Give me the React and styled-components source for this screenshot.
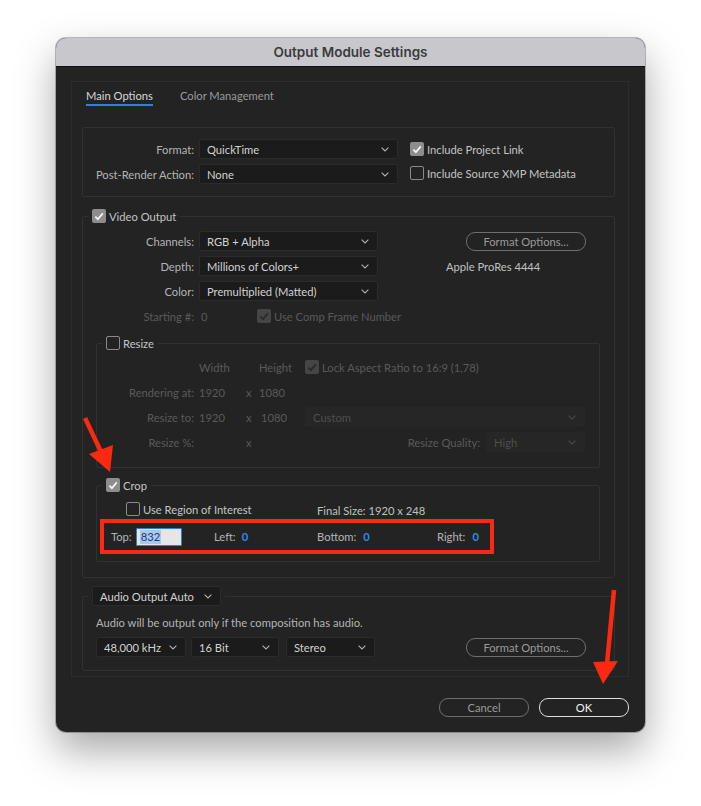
import React from "react";
import styled, { createGlobalStyle } from "styled-components";

const GlobalStyle = createGlobalStyle`
  html, body {
    margin: 0;
    background: #ffffff;
  }
  body {
    font-family: "Lato", "Liberation Sans", sans-serif;
    font-size: 11.2px;
  }
`;

const Page = styled.div`
  padding: 38px 0 0 56px;
  height: 806px;
  box-sizing: border-box;
`;

const Window = styled.div`
  position: relative;
  width: 589px;
  border-radius: 10px;
  overflow: hidden;
  background: #232323;
  box-shadow: 0 18px 40px rgba(0, 0, 0, 0.35), 0 0 0 1px rgba(0, 0, 0, 0.25);
`;

const TitleBar = styled.div`
  height: 28px;
  display: flex;
  align-items: center;
  justify-content: center;
  background: #c8c7cb;
  border-bottom: 1px solid #0e0e0e;
  font-family: "Inter", "Roboto", sans-serif;
  font-weight: 600;
  font-size: 13.5px;
  color: #3b3b3d;
`;

const Body = styled.div`
  padding: 14px 16px 15px 15px;
`;

const TabPanel = styled.div`
  border: 1px solid #2d2d2d;
  padding: 0 13px 5px 10px;
`;

const TabBar = styled.div`
  display: flex;
  gap: 27px;
  padding: 7px 0 0 4px;
  margin-bottom: 21px;
`;

const Tab = styled.div`
  height: 14px;
  line-height: 14px;
  padding-bottom: 1px;
  color: ${(p) => (p.$active ? "#d6d6d6" : "#9a9a9a")};
  border-bottom: 2px solid ${(p) => (p.$active ? "#2f7fe6" : "transparent")};
`;

const Box = styled.div`
  border: 1px solid #313131;
  border-radius: 2px;
  padding: 11px 0 12px;
`;

const Group = styled.fieldset`
  margin: ${(p) => p.$margin || "0"};
  padding: ${(p) => p.$padding || "0"};
  min-width: 0;
  border: 1px solid #313131;
  border-radius: 2px;
`;

const Legend = styled.legend`
  margin-left: 5px;
  padding: 0 4px;
  display: flex;
  align-items: center;
  gap: 4px;
  height: 20px;
  color: #c4c4c4;
`;

const FormRow = styled.div`
  display: grid;
  grid-template-columns: ${(p) => p.$cols};
  align-items: center;
  height: ${(p) => p.$h || 20}px;
`;

const Label = styled.div`
  text-align: right;
  padding-right: 5px;
  white-space: nowrap;
  color: ${(p) => (p.$disabled ? "#5a5a5a" : "#b4b4b4")};
`;

const Text = styled.span`
  white-space: nowrap;
  color: ${(p) => p.$color || "#b4b4b4"};
`;

const Stack = styled.div`
  display: flex;
  flex-direction: column;
  gap: ${(p) => p.$gap || "5px"};
  width: ${(p) => (p.$w ? `${p.$w}px` : "auto")};
  flex: none;
`;

const SelectBox = styled.div`
  box-sizing: border-box;
  width: ${(p) => p.$w}px;
  height: 20px;
  display: flex;
  align-items: center;
  justify-content: space-between;
  padding: 0 8px 0 7px;
  border-radius: 2px;
  background: ${(p) => (p.$disabled ? "#262626" : "#1b1b1b")};
  border: 1px solid ${(p) => (p.$disabled ? "#272727" : "#2b2b2b")};
  color: ${(p) => (p.$disabled ? "#4e4e4e" : "#d2d2d2")};
  white-space: nowrap;
`;

const Chevron = ({ color }) => (
  <svg width="8" height="5" viewBox="0 0 8 5">
    <path d="M0.6 0.6 L4 4 L7.4 0.6" fill="none" stroke={color} strokeWidth="1.1" />
  </svg>
);

const Select = ({ w, value, disabled }) => (
  <SelectBox $w={w} $disabled={disabled}>
    <span>{value}</span>
    <Chevron color={disabled ? "#4a4a4a" : "#b0b0b0"} />
  </SelectBox>
);

const CheckSquare = styled.span`
  box-sizing: border-box;
  width: 14px;
  height: 14px;
  flex: none;
  display: inline-flex;
  align-items: center;
  justify-content: center;
  border-radius: 2px;
  background: ${(p) => (p.$on ? (p.$disabled ? "#454545" : "#8d8d8d") : "transparent")};
  border: ${(p) => (p.$on ? "none" : "1.5px solid #8a8a8a")};
`;

const CheckWrap = styled.span`
  display: inline-flex;
  align-items: center;
  gap: 3px;
  white-space: nowrap;
  color: ${(p) => (p.$disabled ? "#5a5a5a" : "#c4c4c4")};
`;

const Checkbox = ({ on, disabled, children }) => (
  <CheckWrap $disabled={disabled}>
    <CheckSquare $on={on} $disabled={disabled}>
      {on && (
        <svg width="10" height="9" viewBox="0 0 10 9">
          <path
            d="M1.3 4.6 L3.9 7.2 L8.8 1.4"
            fill="none"
            stroke={disabled ? "#2a2a2a" : "#f2f2f2"}
            strokeWidth="1.8"
          />
        </svg>
      )}
    </CheckSquare>
    {children}
  </CheckWrap>
);

const Indent = styled.span`
  padding-left: ${(p) => p.$l}px;
`;

const PillButton = styled.div`
  box-sizing: border-box;
  width: ${(p) => p.$w || 90}px;
  height: 19px;
  margin-left: ${(p) => p.$ml || 0}px;
  display: flex;
  align-items: center;
  justify-content: center;
  border-radius: 9px;
  border: 1.5px solid ${(p) => (p.$primary ? "#dedede" : "#6f6f6f")};
  color: ${(p) => (p.$primary ? "#f4f4f4" : "#9a9a9a")};
  white-space: nowrap;
`;

const VideoTop = styled.div`
  display: flex;
  padding-top: 5px;
`;

const SideInfo = styled.div`
  display: flex;
  flex-direction: column;
  align-items: flex-start;
  gap: 9px;
  padding: 1px 0 0 68px;
`;

const CropHighlight = styled.div`
  box-sizing: border-box;
  width: 394px;
  height: 35px;
  margin: 0 0 0 3px;
  display: flex;
  align-items: center;
  padding-left: 7px;
  border: 4px solid #fa2a12;
`;

const Field = styled.div`
  width: ${(p) => p.$w}px;
  display: flex;
  align-items: center;
  justify-content: ${(p) => (p.$end ? "flex-end" : "flex-start")};
  gap: ${(p) => p.$gap}px;
  flex: none;
`;

const Value = styled.span`
  color: #2d8ceb;
  font-weight: 700;
`;

const NumberInput = styled.div`
  box-sizing: border-box;
  width: 46px;
  height: 18px;
  display: flex;
  align-items: center;
  padding-left: 3px;
  background: #e6e6e6;
  border: 1px solid #2c7ee0;
  border-radius: 1px;
  span {
    background: #a9c8ef;
    color: #1b3d78;
    padding: 0 1px;
    line-height: 14px;
  }
`;

const AudioInner = styled.div`
  padding: 10px 0 13px 13px;
`;

const AudioSelects = styled.div`
  display: flex;
  align-items: center;
  margin-top: 8px;
`;

const Footer = styled.div`
  display: flex;
  justify-content: flex-end;
  gap: 10px;
  padding: 21px 0 0;
`;

const Overlay = styled.svg`
  position: absolute;
  inset: 0;
  pointer-events: none;
`;

export default function App() {
  return (
    <>
      <GlobalStyle />
      <Page>
        <Window>
          <TitleBar>Output Module Settings</TitleBar>
          <Body>
            <TabPanel>
              <TabBar>
                <Tab $active>Main Options</Tab>
                <Tab>Color Management</Tab>
              </TabBar>

              <Box>
                <Stack>
                  <FormRow $cols="116px 199px auto">
                    <Label>Format:</Label>
                    <Select w={199} value="QuickTime" />
                    <Indent $l={12}>
                      <Checkbox on>Include Project Link</Checkbox>
                    </Indent>
                  </FormRow>
                  <FormRow $cols="116px 199px auto">
                    <Label>Post-Render Action:</Label>
                    <Select w={199} value="None" />
                    <Indent $l={12}>
                      <Checkbox>Include Source XMP Metadata</Checkbox>
                    </Indent>
                  </FormRow>
                </Stack>
              </Box>

              <Group $margin="9px 0 0" $padding="0 0 15px">
                <Legend>
                  <Checkbox on>Video Output</Checkbox>
                </Legend>
                <VideoTop>
                  <Stack $w={295}>
                    <FormRow $cols="116px 179px">
                      <Label>Channels:</Label>
                      <Select w={179} value="RGB + Alpha" />
                    </FormRow>
                    <FormRow $cols="116px 179px">
                      <Label>Depth:</Label>
                      <Select w={179} value="Millions of Colors+" />
                    </FormRow>
                    <FormRow $cols="116px 179px">
                      <Label>Color:</Label>
                      <Select w={179} value="Premultiplied (Matted)" />
                    </FormRow>
                    <FormRow $cols="116px 58px 121px">
                      <Label $disabled>Starting #:</Label>
                      <Indent $l={2}>
                        <Text $color="#5a5a5a">0</Text>
                      </Indent>
                      <Checkbox on disabled>
                        Use Comp Frame Number
                      </Checkbox>
                    </FormRow>
                  </Stack>
                  <SideInfo>
                    <PillButton $w={120} $ml={20}>
                      Format Options...
                    </PillButton>
                    <Text $color="#c0c0c0">Apple ProRes 4444</Text>
                  </SideInfo>
                </VideoTop>

                <Group $margin="7px 14px 0 13px" $padding="4px 0 15px">
                  <Legend>
                    <Checkbox>Resize</Checkbox>
                  </Legend>
                  <Stack>
                    <FormRow $cols="102px 60px 46px auto">
                      <span />
                      <Text $color="#5a5a5a">Width</Text>
                      <Text $color="#5a5a5a">Height</Text>
                      <Checkbox on disabled>
                        Lock Aspect Ratio to 16:9 (1,78)
                      </Checkbox>
                    </FormRow>
                    <FormRow $cols="102px 47px 13px 46px 280px">
                      <Label $disabled>Rendering at:</Label>
                      <Text $color="#5a5a5a">1920</Text>
                      <Text $color="#5a5a5a">x</Text>
                      <Text $color="#5a5a5a">1080</Text>
                    </FormRow>
                    <FormRow $cols="102px 47px 13px 46px 280px">
                      <Label $disabled>Resize to:</Label>
                      <Text $color="#5a5a5a">1920</Text>
                      <Text $color="#5a5a5a">x</Text>
                      <Indent $l={2}>
                        <Text $color="#5a5a5a">1080</Text>
                      </Indent>
                      <Select w={280} value="Custom" disabled />
                    </FormRow>
                    <FormRow $cols="102px 47px 13px 46px 280px">
                      <Label $disabled>Resize %:</Label>
                      <span />
                      <Text $color="#5a5a5a">x</Text>
                      <span />
                      <Field $w={280} $gap={6} $end>
                        <Text $color="#5a5a5a">Resize Quality:</Text>
                        <Select w={99} value="High" disabled />
                      </Field>
                    </FormRow>
                  </Stack>
                </Group>

                <Group $margin="7px 14px 0 13px" $padding="6px 0 7px">
                  <Legend>
                    <Checkbox on>Crop</Checkbox>
                  </Legend>
                  <FormRow $cols="220px auto" $h={18}>
                    <Indent $l={29}>
                      <Checkbox>Use Region of Interest</Checkbox>
                    </Indent>
                    <Text $color="#c0c0c0">Final Size: 1920 x 248</Text>
                  </FormRow>
                  <CropHighlight>
                    <Field $w={103} $gap={4}>
                      <Text>Top:</Text>
                      <NumberInput>
                        <span>832</span>
                      </NumberInput>
                    </Field>
                    <Field $w={103} $gap={6}>
                      <Text>Left:</Text>
                      <Value>0</Value>
                    </Field>
                    <Field $w={120} $gap={7}>
                      <Text>Bottom:</Text>
                      <Value>0</Value>
                    </Field>
                    <Field $w={50} $gap={7}>
                      <Text>Right:</Text>
                      <Value>0</Value>
                    </Field>
                  </CropHighlight>
                </Group>
              </Group>

              <Group $margin="8px 0 0">
                <Legend>
                  <Select w={129} value="Audio Output Auto" />
                </Legend>
                <AudioInner>
                  <Text>Audio will be output only if the composition has audio.</Text>
                  <AudioSelects>
                    <Select w={90} value="48,000 kHz" />
                    <Indent $l={5} />
                    <Select w={88} value="16 Bit" />
                    <Indent $l={7} />
                    <Select w={89} value="Stereo" />
                    <PillButton $w={120} $ml={91}>
                      Format Options...
                    </PillButton>
                  </AudioSelects>
                </AudioInner>
              </Group>
            </TabPanel>

            <Footer>
              <PillButton>Cancel</PillButton>
              <PillButton $primary>OK</PillButton>
            </Footer>
          </Body>

          <Overlay width="589" height="693" viewBox="0 0 589 693">
            <g fill="#fa2a12" stroke="#fa2a12">
              <line x1="29" y1="380" x2="46" y2="416" strokeWidth="4.5" />
              <polygon points="33,416 57,407 54,434" strokeWidth="0" />
              <line x1="558" y1="552" x2="551" y2="626" strokeWidth="4.5" />
              <polygon points="537,624 562,623 547,646" strokeWidth="0" />
            </g>
          </Overlay>
        </Window>
      </Page>
    </>
  );
}
